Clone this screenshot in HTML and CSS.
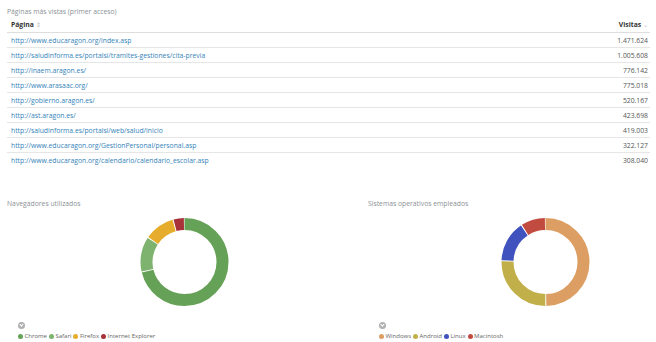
FILE: index.html
```html
<!DOCTYPE html>
<html lang="es">
<head>
    <meta charset="UTF-8">
    <meta name="viewport" content="width=device-width, initial-scale=1.0">
    <title>Estadísticas de acceso</title>
    <link rel="stylesheet" href="styles.css">
</head>
<body>

    <div class="stats-container">
        <div class="section-title">Páginas más vistas (primer acceso)</div>

        <table class="pages-table">
            <tr>
                <th class="col-page">Página <span class="sort-icon">&#8661;</span></th>
                <th class="col-visits">Visitas <span class="sort-icon">&#8964;</span></th>
            </tr>
            <tr><td><a href="#">http://www.educaragon.org/index.asp</a></td><td class="num">1.471.624</td></tr>
            <tr><td><a href="#">http://saludinforma.es/portalsi/tramites-gestiones/cita-previa</a></td><td class="num">1.005.608</td></tr>
            <tr><td><a href="#">http://inaem.aragon.es/</a></td><td class="num">776.142</td></tr>
            <tr><td><a href="#">http://www.arasaac.org/</a></td><td class="num">775.018</td></tr>
            <tr><td><a href="#">http://gobierno.aragon.es/</a></td><td class="num">520.167</td></tr>
            <tr><td><a href="#">http://ast.aragon.es/</a></td><td class="num">423.698</td></tr>
            <tr><td><a href="#">http://saludinforma.es/portalsi/web/salud/inicio</a></td><td class="num">419.003</td></tr>
            <tr><td><a href="#">http://www.educaragon.org/GestionPersonal/personal.asp</a></td><td class="num">322.127</td></tr>
            <tr><td><a href="#">http://www.educaragon.org/calendario/calendario_escolar.asp</a></td><td class="num">308.040</td></tr>
        </table>

        <div class="charts-row">
            <!-- Navegadores -->
            <div class="chart-box">
                <div class="section-title">Navegadores utilizados</div>
                <svg class="donut" width="355" height="92" viewBox="0 0 355 92">
                    <g transform="rotate(-90 177.5 46)" fill="none" stroke-width="12">
                        <circle cx="177.5" cy="46" r="38" stroke="#65a156" stroke-dasharray="169.5 238.76" stroke-dashoffset="0"/>
                        <circle cx="177.5" cy="46" r="38" stroke="#7db36e" stroke-dasharray="30.2 238.76" stroke-dashoffset="-170.5"/>
                        <circle cx="177.5" cy="46" r="38" stroke="#e6ad2c" stroke-dasharray="26.2 238.76" stroke-dashoffset="-201.6"/>
                        <circle cx="177.5" cy="46" r="38" stroke="#a8313a" stroke-dasharray="9 238.76" stroke-dashoffset="-228.8"/>
                    </g>
                </svg>
                <div class="legend">
                    <span class="legend-toggle"></span>
                    <div class="legend-items">
                        <span class="legend-item"><i class="dot" style="background:#65a156"></i>Chrome</span>
                        <span class="legend-item"><i class="dot" style="background:#7db36e"></i>Safari</span>
                        <span class="legend-item"><i class="dot" style="background:#e6ad2c"></i>Firefox</span>
                        <span class="legend-item"><i class="dot" style="background:#a8313a"></i>Internet Explorer</span>
                    </div>
                </div>
            </div>

            <!-- Sistemas operativos -->
            <div class="chart-box">
                <div class="section-title">Sistemas operativos empleados</div>
                <svg class="donut" width="355" height="92" viewBox="0 0 355 92">
                    <g transform="rotate(-90 177.5 46)" fill="none" stroke-width="12">
                        <circle cx="177.5" cy="46" r="38" stroke="#dc9e62" stroke-dasharray="118.4 238.76" stroke-dashoffset="0"/>
                        <circle cx="177.5" cy="46" r="38" stroke="#c1b049" stroke-dasharray="60 238.76" stroke-dashoffset="-119.4"/>
                        <circle cx="177.5" cy="46" r="38" stroke="#4052bd" stroke-dasharray="35.5 238.76" stroke-dashoffset="-180.4"/>
                        <circle cx="177.5" cy="46" r="38" stroke="#c24b40" stroke-dasharray="20.9 238.76" stroke-dashoffset="-216.9"/>
                    </g>
                </svg>
                <div class="legend">
                    <span class="legend-toggle"></span>
                    <div class="legend-items">
                        <span class="legend-item"><i class="dot" style="background:#dc9e62"></i>Windows</span>
                        <span class="legend-item"><i class="dot" style="background:#c1b049"></i>Android</span>
                        <span class="legend-item"><i class="dot" style="background:#4052bd"></i>Linux</span>
                        <span class="legend-item"><i class="dot" style="background:#c24b40"></i>Macintosh</span>
                    </div>
                </div>
            </div>
        </div>
    </div>

</body>
</html>
```

FILE: styles.css
```css
body {
    font-family: "Open Sans", Arial, sans-serif;
    margin: 0;
    background: #ffffff;
    color: #555;
    overflow: hidden;
}

.stats-container {
    padding: 7px 6px 0 7px;
}

.section-title {
    font-size: 6.8px;
    line-height: 9px;
    color: #8c9196;
}

/* Tabla de paginas */
.pages-table {
    width: 100%;
    border-collapse: collapse;
    margin-top: 2px;
}

.pages-table th,
.pages-table td {
    height: 14px;
    padding: 0 4px;
    font-size: 6.8px;
    line-height: 9px;
    text-align: left;
    white-space: nowrap;
}

.pages-table th {
    font-weight: bold;
    color: #333;
    border-bottom: 1px solid #dedede;
}

.pages-table td {
    border-top: 1px solid #e6e6e6;
}

.pages-table tr:nth-child(2) td {
    border-top: none;
}

.pages-table .col-visits,
.pages-table .num {
    text-align: right;
    padding-right: 2px;
}

.sort-icon {
    font-weight: normal;
    color: #bbb;
    font-size: 6px;
}

.pages-table a {
    color: #3483b8;
    text-decoration: none;
}

/* Graficos */
.charts-row {
    display: grid;
    grid-template-columns: 361px 1fr;
    margin-top: 32px;
}

.chart-box {
    overflow: hidden;
}

.donut {
    display: block;
    margin-top: 8px;
}

.legend {
    padding-left: 11px;
    margin-top: 14px;
}

.legend-toggle {
    display: block;
    width: 7px;
    height: 7px;
    border-radius: 50%;
    background: #b0b0b0;
    position: relative;
}

.legend-toggle::after {
    content: "";
    position: absolute;
    left: 2.2px;
    top: 1.3px;
    width: 1.8px;
    height: 1.8px;
    border-right: 1px solid #fff;
    border-bottom: 1px solid #fff;
    transform: rotate(45deg);
}

.legend-items {
    display: flex;
    gap: 2px;
    margin-top: 3px;
}

.legend-item {
    display: flex;
    align-items: center;
    font-size: 6px;
    line-height: 8px;
    color: #666;
}

.dot {
    display: inline-block;
    width: 5px;
    height: 5px;
    border-radius: 50%;
    margin-right: 1.5px;
}
```
